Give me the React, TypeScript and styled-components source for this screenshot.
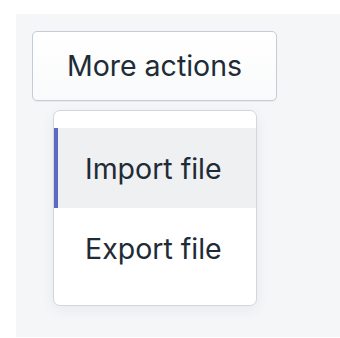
import { createGlobalStyle } from "styled-components";
import styled from "styled-components";

const Global = createGlobalStyle`
  html, body {
    margin: 0;
    background: #ffffff;
  }
  body {
    font-family: Inter, "Noto Sans", "Liberation Sans", sans-serif;
    color: #212b36;
  }
`;

const Page = styled.div`
  padding: 14px 0 0 16px;
  height: 338px;
  box-sizing: border-box;
`;

const Panel = styled.div`
  background: #f4f6f8;
  height: 323px;
  padding: 17px 16px;
  box-sizing: border-box;
`;

const Button = styled.button`
  display: block;
  width: 245px;
  height: 70px;
  border: 1px solid #c4cdd5;
  border-radius: 5px;
  background: linear-gradient(180deg, #ffffff, #f9fafb);
  box-shadow: 0 1px 0 rgba(22, 29, 37, 0.05);
  font-family: inherit;
  font-size: 28.5px;
  color: #212b36;
  padding: 0 0 2px;
`;

const Menu = styled.ul`
  list-style: none;
  margin: 9px 0 0 21px;
  padding: 17px 0;
  width: 204px;
  box-sizing: border-box;
  background: #ffffff;
  border: 1px solid #d3d7dc;
  border-radius: 7px;
  box-shadow: 0 4px 14px rgba(33, 43, 54, 0.06);
`;

const Item = styled.li<{ $active?: boolean }>`
  height: 80px;
  display: flex;
  align-items: center;
  padding-left: 27px;
  font-size: 28.5px;
  background: ${(p) => (p.$active ? "#eff0f2" : "transparent")};
  border-left: 4px solid ${(p) => (p.$active ? "#5c6ac4" : "transparent")};
`;

export default function App() {
  return (
    <>
      <Global />
      <Page>
        <Panel>
          <Button>More actions</Button>
          <Menu>
            <Item $active>Import file</Item>
            <Item>Export file</Item>
          </Menu>
        </Panel>
      </Page>
    </>
  );
}
